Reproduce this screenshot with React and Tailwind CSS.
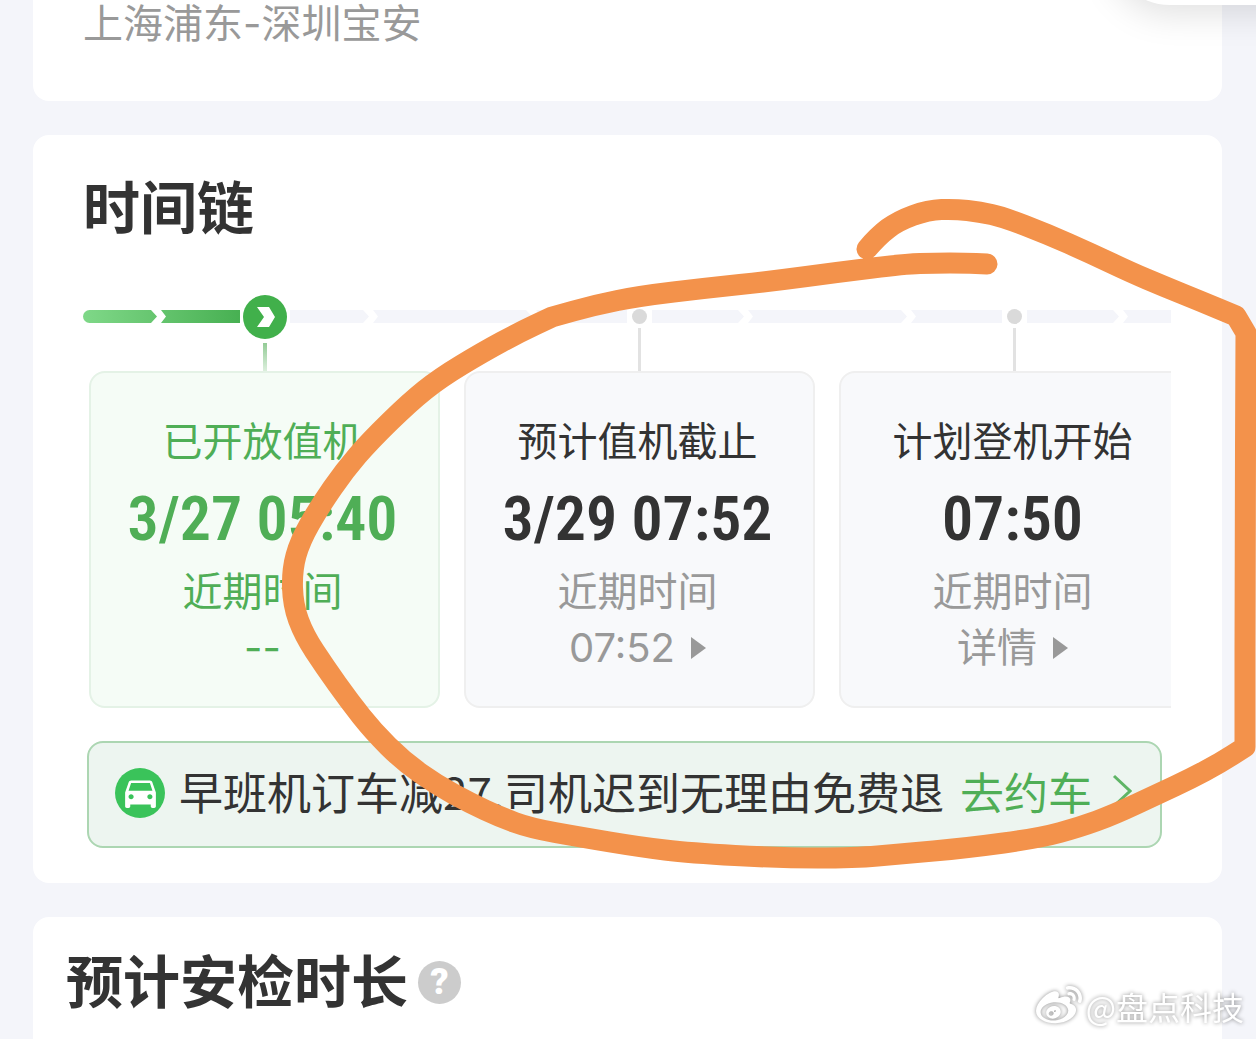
import React from "react";
import { MdDirectionsCar } from "react-icons/md";
import { FaWeibo } from "react-icons/fa";

const steps = [
  {
    label: "已开放值机",
    time: "3/27 05:40",
    recent: "--",
    active: true,
    hasMore: false,
  },
  {
    label: "预计值机截止",
    time: "3/29 07:52",
    recent: "07:52",
    active: false,
    hasMore: true,
  },
  {
    label: "计划登机开始",
    time: "07:50",
    recent: "详情",
    active: false,
    hasMore: true,
  },
];

// Repeated points keep a corner sharp
const strokePoints = [
  [867, 249], [878, 236], [898, 221], [928, 210], [955, 209], [980, 212],
  [1003, 217], [1047, 234], [1090, 253], [1130, 272], [1163, 286], [1200, 301],
  [1236, 316], [1236, 316], [1246, 333], [1246, 333], [1245, 560], [1245, 747],
  [1245, 747], [1220, 763], [1190, 779], [1160, 793], [1113, 815],
  [1080, 827], [1040, 838], [967, 848], [900, 854], [855, 858], [780, 858],
  [690, 853], [640, 847], [580, 837], [530, 828], [500, 817], [470, 803],
  [437, 785], [403, 761], [373, 731], [350, 702], [325, 667], [304, 635],
  [293, 605], [292, 570], [300, 541], [320, 506], [345, 470], [370, 441],
  [410, 402], [440, 378], [483, 352], [520, 332], [552, 317], [552, 317],
  [595, 305], [640, 296], [707, 288], [773, 281], [840, 272], [905, 264],
  [935, 263], [965, 263], [987, 264],
];

// Smooth the hand-drawn points with quadratic curves through the midpoints
function toPath(points) {
  let d = `M${points[0][0]} ${points[0][1]}`;
  for (let i = 1; i < points.length - 1; i++) {
    const [x, y] = points[i];
    const [nx, ny] = points[i + 1];
    d += ` Q${x} ${y} ${(x + nx) / 2} ${(y + ny) / 2}`;
  }
  const last = points[points.length - 1];
  return `${d} L${last[0]} ${last[1]}`;
}

function TrackArrow() {
  return (
    <svg className="h-[13px] w-[15px]" viewBox="0 0 15 13" aria-hidden="true">
      <path d="M0 0H10L15 6.5L10 13H0L6 6.5Z" fill="#fff" />
    </svg>
  );
}

function StepNode({ active }) {
  if (active) {
    return (
      <div className="flex h-[76px] w-[50px] flex-col items-center">
        <div className="flex h-11 w-11 items-center justify-center rounded-full bg-[#41b04b]">
          <svg className="h-5 w-5" viewBox="0 0 20 20" aria-hidden="true">
            <path d="M2 0H14L20 10L14 20H2L9 10Z" fill="#fff" />
          </svg>
        </div>
        <div className="mt-1 w-1 flex-1 bg-linear-to-b from-[#93cb96] to-[#dcefdd]" />
      </div>
    );
  }
  return (
    <div className="flex h-[76px] w-[25px] flex-col items-center pt-[14px]">
      <div className="h-[15px] w-[15px] rounded-full bg-[#dadada]" />
      <div className="mt-1 w-[3px] flex-1 bg-[#e2e2e2]" />
    </div>
  );
}

function Step({ step, first }) {
  const { label, time, recent, active, hasMore } = step;
  return (
    <li className="w-[375px] shrink-0">
      <div className="flex">
        <div
          className={`mt-[15px] flex h-[13px] flex-1 ${
            active
              ? "bg-linear-to-r from-[#7fd888] to-[#47b052]"
              : "bg-[#f4f5fa]"
          } ${first ? "ml-[6px] rounded-l-full pl-[68px]" : "pl-[74px]"}`}
        >
          <TrackArrow />
        </div>
        <StepNode active={active} />
        <div className="mt-[15px] flex h-[13px] flex-1 justify-end bg-[#f4f5fa] pr-[74px]">
          <TrackArrow />
        </div>
      </div>
      <div
        className={`mx-3 flex h-[337px] flex-col items-center rounded-2xl border-2 pt-[38px] pr-1 text-[40px] leading-[56px] ${
          active
            ? "border-[#e4f2e6] bg-[#f5fcf6] text-[#4fae56]"
            : "border-[#efefef] bg-[#f8f9fb] text-[#999]"
        }`}
      >
        <div className={active ? "" : "text-[#333]"}>{label}</div>
        <div
          className={`mt-5 font-['Roboto_Condensed','Liberation_Sans_Narrow',Roboto,sans-serif] text-[62px] leading-[64px] font-semibold ${
            active ? "" : "text-[#333]"
          }`}
        >
          {time}
        </div>
        <div className="mt-[10px]">近期时间</div>
        {hasMore ? (
          <button
            type="button"
            className="mt-[3px] flex items-center gap-4 font-[Inter,'Noto_Sans_CJK_SC',sans-serif]"
          >
            {recent}
            <svg className="h-[22px] w-[15px]" viewBox="0 0 15 22" aria-hidden="true">
              <path d="M0 0L15 11L0 22Z" fill="#999" />
            </svg>
          </button>
        ) : (
          <div className="mt-[3px] font-[Inter,sans-serif]">{recent}</div>
        )}
      </div>
    </li>
  );
}

export default function App() {
  return (
    <div className="relative flex min-h-screen flex-col gap-[34px] overflow-hidden bg-[#f4f5fa] pr-[34px] pl-[33px] font-['Noto_Sans_CJK_SC',sans-serif] text-[#333]">
      <section className="rounded-b-2xl bg-white px-[50px] pb-[53px]">
        <p className="font-[Inter,'Noto_Sans_CJK_SC',sans-serif] text-[40px] leading-[48px] text-[#999]">
          上海浦东-深圳宝安
        </p>
      </section>

      <section className="rounded-2xl bg-white pt-[41px] pr-[51px] pb-[35px] pl-[50px]">
        <h2 className="pb-2 text-[57px] leading-[56px] font-bold">时间链</h2>

        <div className="mt-[55px] overflow-hidden">
          <ol className="-ml-[6px] flex">
            {steps.map((step, index) => (
              <Step key={step.label} step={step} first={index === 0} />
            ))}
          </ol>
        </div>

        <div className="mt-[33px] mr-[9px] ml-1 flex h-[107px] items-center rounded-2xl border-2 border-[#acd6b2] bg-[#edf5f0] px-[26px] pb-1 text-[44px] leading-[64px] whitespace-nowrap">
          <span className="flex h-[50px] w-[50px] shrink-0 items-center justify-center rounded-full bg-[#3ac35a] text-white">
            <MdDirectionsCar size={41} />
          </span>
          <span className="ml-[14px] pb-1">
            早班机订车减27,司机迟到无理由免费退
          </span>
          <a
            href="#car"
            className="ml-4 flex items-center gap-5 pb-1 text-[#4fae56]"
          >
            去约车
            <svg className="h-9 w-5" viewBox="0 0 20 36" aria-hidden="true">
              <path
                d="M2 3L18 18L2 33"
                fill="none"
                stroke="#5fb566"
                strokeWidth="3"
              />
            </svg>
          </a>
        </div>
      </section>

      <section className="flex-1 rounded-t-2xl bg-white px-[33px] pt-[33px]">
        <div className="flex items-center gap-[10px]">
          <h2 className="pb-2 text-[57px] leading-[56px] font-bold">
            预计安检时长
          </h2>
          <button
            type="button"
            className="flex h-[43px] w-[43px] items-center justify-center rounded-full bg-[#ccc] font-[Roboto,sans-serif] text-[36px] leading-none font-black text-white"
          >
            ?
          </button>
        </div>
      </section>

      {/* floating pill at the top right */}
      <div className="absolute -top-[115px] -right-[88px] h-[120px] w-[234px] rounded-full bg-white shadow-[0_8px_36px_rgba(0,0,0,0.13)]" />

      {/* hand-drawn circle */}
      <svg
        className="pointer-events-none absolute top-0 left-0 h-[1039px] w-[1256px]"
        viewBox="0 0 1256 1039"
        aria-hidden="true"
      >
        <path
          d={toPath(strokePoints)}
          fill="none"
          stroke="#f3924b"
          strokeWidth="21"
          strokeLinecap="round"
          strokeLinejoin="round"
        />
      </svg>

      <div className="absolute right-3 bottom-[10px] flex items-center gap-1 text-[32px] leading-[44px] text-white drop-shadow-[0_0_2px_rgba(0,0,0,0.45)]">
        <FaWeibo size={46} />
        <span>@盘点科技</span>
      </div>
    </div>
  );
}
